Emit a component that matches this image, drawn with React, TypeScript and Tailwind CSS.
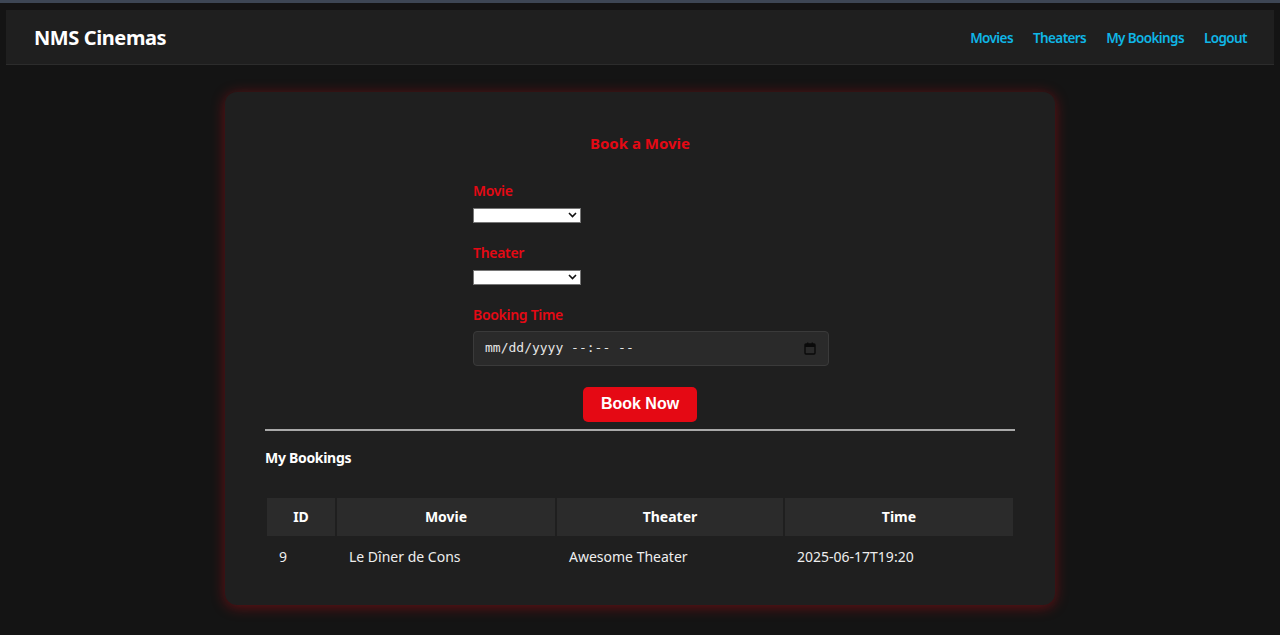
import React from "react";

function Chevron() {
  return (
    <svg width="9" height="6" viewBox="0 0 9 6" className="shrink-0">
      <path d="M1 1 L4.5 4.5 L8 1" fill="none" stroke="#111" strokeWidth="1.6" />
    </svg>
  );
}

function FakeSelect() {
  return (
    <div className="flex h-[15px] w-[108px] items-center justify-end border border-[#767676] bg-white pr-[3px]">
      <Chevron />
    </div>
  );
}

export default function App() {
  const font = { fontFamily: '"Noto Sans", "Open Sans", sans-serif' };
  return (
    <div className="min-h-[635px] bg-[#141414] pb-[30px] text-white" style={font}>
      <div className="h-[3px] bg-[#3d4654]" />
      <div className="px-[6px] pt-[7px]">
        <nav className="flex h-[55px] items-center justify-between border-b border-[#2c2c2c] bg-[#1f1f1f] pl-[28px] pr-[27px] pt-[2px]">
          <div className="text-[20px] font-bold tracking-[-0.4px]">NMS Cinemas</div>
          <div className="flex gap-[20px] text-[13.5px] font-semibold tracking-[-0.6px] text-[#0fb6e6]">
            <span>Movies</span>
            <span>Theaters</span>
            <span>My Bookings</span>
            <span>Logout</span>
          </div>
        </nav>
      </div>
      <div className="mx-auto mt-[27px] w-[830px] rounded-[12px] bg-[#1f1f1f] px-[40px] pb-[27px] pt-[40px] shadow-[0_2px_14px_rgba(229,9,20,0.4)]">
        <h2 className="text-center text-[15px] font-bold text-[#e50914]">Book a Movie</h2>
        <div className="ml-[208px] mt-[25px] flex w-[356px] flex-col">
          <label className="text-[14px] font-semibold tracking-[-0.3px] text-[#e50914]">Movie</label>
          <div className="mt-[7px]"><FakeSelect /></div>
          <label className="mt-[19px] text-[14px] font-semibold tracking-[-0.3px] text-[#e50914]">Theater</label>
          <div className="mt-[7px]"><FakeSelect /></div>
          <label className="mt-[19px] text-[14px] font-semibold tracking-[-0.3px] text-[#e50914]">Booking Time</label>
          <div className="mt-[6px] flex h-[35px] items-center justify-between rounded-[4px] border border-[#3a3a3a] bg-[#2a2a2a] pl-[11px] pr-[12px]">
            <span className="text-[13px] text-[#e6e6e6]" style={{ fontFamily: '"DejaVu Sans Mono", monospace' }}>mm/dd/yyyy --:-- --</span>
            <svg width="12" height="13" viewBox="0 0 12 13">
              <rect x="1" y="2" width="10" height="10" rx="1" fill="none" stroke="#0a0a0a" strokeWidth="1.4" />
              <rect x="1" y="2" width="10" height="3" fill="#0a0a0a" />
              <rect x="3" y="0.5" width="1.4" height="2.5" fill="#0a0a0a" />
              <rect x="7.6" y="0.5" width="1.4" height="2.5" fill="#0a0a0a" />
            </svg>
          </div>
        </div>
        <div className="mt-[21px] flex justify-center">
          <button
            className="h-[35px] w-[114px] rounded-[5px] bg-[#e50914] text-[16px] font-bold text-white"
            style={{ fontFamily: '"Liberation Sans", Arial, sans-serif' }}
          >
            Book Now
          </button>
        </div>
        <hr className="mt-[7px] border-t-2 border-[#a9a9a9]" />
        <h3 className="mt-[16px] text-[14px] font-bold tracking-[-0.3px]">My Bookings</h3>
        <table className="mt-[28px] w-full border-separate border-spacing-[2px] text-[14px]">
          <thead>
            <tr className="font-bold">
              <th className="h-[38px] w-[68px] bg-[#2b2b2b]">ID</th>
              <th className="w-[218px] bg-[#2b2b2b]">Movie</th>
              <th className="w-[226px] bg-[#2b2b2b]">Theater</th>
              <th className="bg-[#2b2b2b]">Time</th>
            </tr>
          </thead>
          <tbody>
            <tr className="text-[#eeeeee]">
              <td className="h-[38px] px-[12px]">9</td>
              <td className="px-[12px]">Le Dîner de Cons</td>
              <td className="px-[12px]">Awesome Theater</td>
              <td className="px-[12px]">2025-06-17T19:20</td>
            </tr>
          </tbody>
        </table>
      </div>
    </div>
  );
}
